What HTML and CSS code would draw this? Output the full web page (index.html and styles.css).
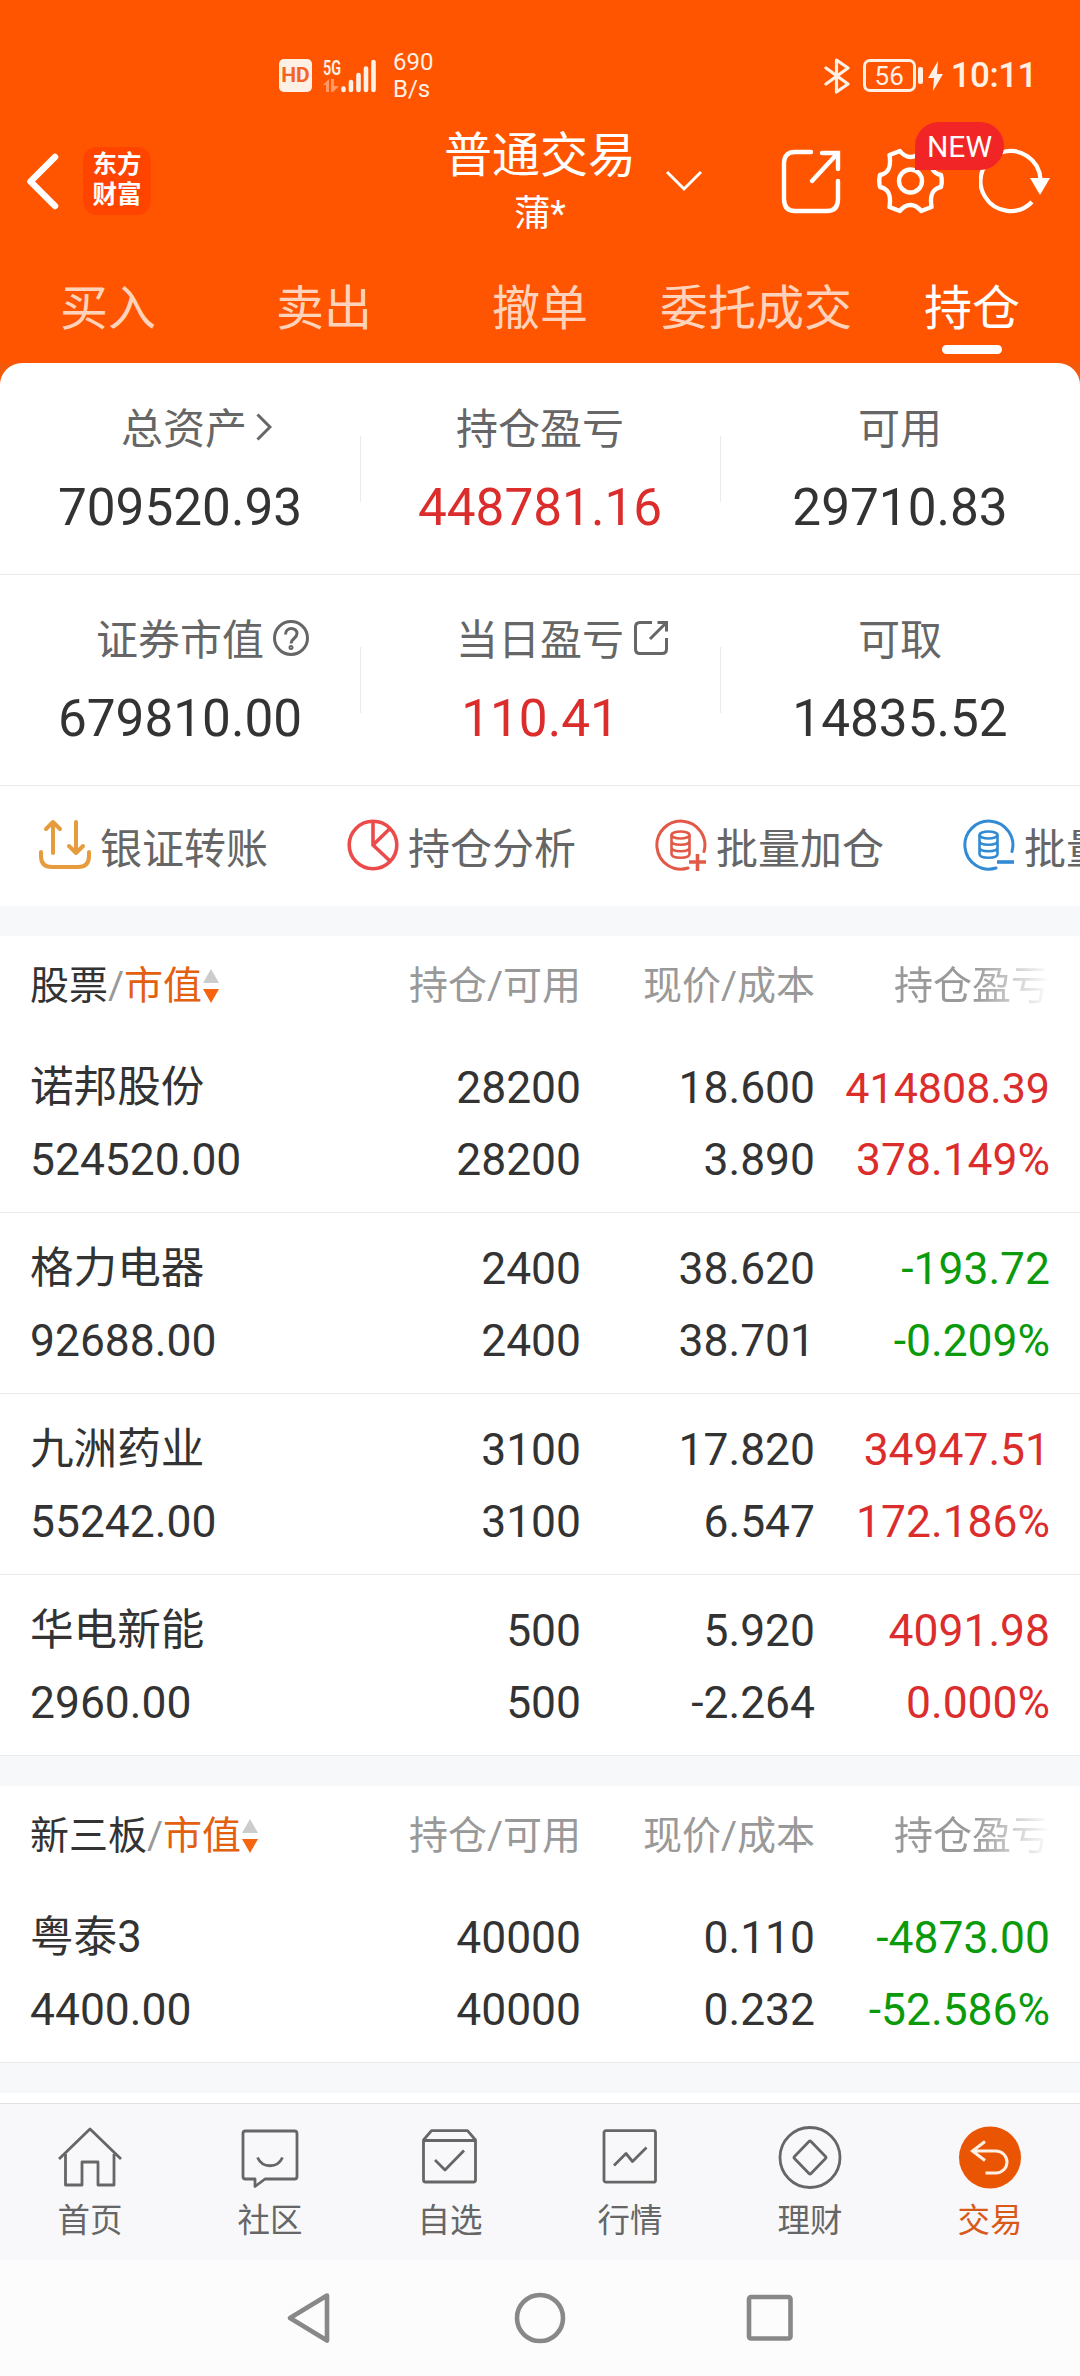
FILE: index.html
```html
<!DOCTYPE html>
<html lang="zh-CN">
<head>
  <meta charset="UTF-8" />
  <meta name="viewport" content="width=device-width, initial-scale=1" />
  <title>普通交易 - 持仓</title>
  <link rel="stylesheet" href="styles.css">
</head>
<body>

  <header class="header">
    <!-- STATUS BAR -->
    <div class="status">
      <div class="status-left">
        <span class="hd">HD</span>
        <svg class="signal" width="54" height="34" viewBox="0 0 54 34">
          <text x="0" y="15.500" class="signal-text" textLength="18" lengthAdjust="spacingAndGlyphs">5G</text>
          <g fill="#ff9a66">
            <path d="M0 26l6-6v13H3v-7z" />
            <path d="M8 20h3v7h5l-6 6H8z" />
          </g>
          <g stroke="#fff0e6" stroke-width="4.6" stroke-linecap="round">
            <path d="M20.500 29.500v1.500M28 23v8M35.500 16v15M43 9.500v21.500M50.500 3v28" />
          </g>
        </svg>
        <div class="speed"><span>690</span><span>B/s</span></div>
      </div>
      <div class="status-right">
        <svg width="27" height="36" viewBox="0 0 27 36" fill="none" stroke="#fff0e6" stroke-width="3.2" stroke-linejoin="round" stroke-linecap="round">
          <path d="M2 10l22 16-11.500 8V2L24 10 2 26" />
        </svg>
        <span class="battery">56</span>
        <span class="battery-tip"></span>
        <svg class="bolt" width="15" height="30" viewBox="0 0 15 30" fill="#fff0e6"><path d="M10 0L0 17h6L5 30l10-17H9z" /></svg>
        <span class="clock">10:11</span>
      </div>
    </div>

    <!-- TITLE BAR -->
    <div class="titlebar">
      <div class="title-left">
        <svg width="34" height="60" viewBox="0 0 34 60" fill="none" stroke="#fff" stroke-width="6.500" stroke-linecap="round" stroke-linejoin="round"><path d="M29 6L4.500 30.500 29 55" /></svg>
        <div class="brand"><span>东方</span><span>财富</span></div>
      </div>
      <div class="title">
        <h1>普通交易</h1>
        <p>蒲*</p>
      </div>
      <div class="title-right">
        <svg class="chevron" width="36" height="22" viewBox="0 0 36 22" fill="none" stroke="#fff" stroke-width="3"><path d="M1 2l17 17L35 2" /></svg>
        <svg class="share" width="60" height="66" viewBox="0 0 60 66" fill="none" stroke="#fff" stroke-width="4.400" stroke-linecap="round" stroke-linejoin="round">
          <path d="M30 4H14Q3 4 3 15v36q0 12 11 12h32q11 0 11-12V33" />
          <path d="M31 33L56 6M41 5h16v16" stroke-linejoin="miter" />
        </svg>
        <div class="gear">
          <svg width="67" height="66" viewBox="0 0 67 66" fill="none" stroke="#fff" stroke-width="4.400" stroke-linejoin="round">
            <path d="M22.900 3C26 7 29 9 33.500 9S41 7 44.100 3L54.500 7C53 17 54 25 64 27Q65.500 33 64 39C54 41 53 49 54.500 59L44.100 63C41 59 38 57 33.500 57S26 59 22.900 63L12.500 59C14 49 13 41 3 39Q1.500 33 3 27C13 25 14 17 12.500 7Z" />
            <circle cx="33.500" cy="33" r="11.500" />
          </svg>
          <span class="new">NEW</span>
        </div>
        <svg width="72" height="66" viewBox="0 0 72 66" fill="none">
          <path d="M53 54A30 30 0 1 1 61.500 31" stroke="#fff" stroke-width="4.200" />
          <path d="M51 30h20L61 47z" fill="#fff" />
        </svg>
      </div>
    </div>

    <!-- TABS -->
    <nav class="tabs">
      <a>买入</a>
      <a>卖出</a>
      <a>撤单</a>
      <a>委托成交</a>
      <a class="active">持仓</a>
    </nav>
  </header>

  <main>
    <!-- ACCOUNT SUMMARY -->
    <section class="summary-wrap">
      <div class="summary">
        <div class="cell">
          <div class="label shifted">总资产
            <svg class="mark arrow" width="16" height="28" viewBox="0 0 16 28"><path d="M1.500 1.500L14 14 1.500 26.500" /></svg>
          </div>
          <div class="value">709520.93</div>
        </div>
        <div class="cell">
          <div class="label">持仓盈亏</div>
          <div class="value up">448781.16</div>
        </div>
        <div class="cell">
          <div class="label">可用</div>
          <div class="value">29710.83</div>
        </div>
      </div>
      <div class="summary">
        <div class="cell">
          <div class="label">证券市值
            <svg class="mark" width="36" height="36" viewBox="0 0 36 36"><circle cx="18" cy="18" r="16.500" /><path d="M12.500 14.500C12.500 6.500 24 7 24 13.500c0 5-6 5-6 10" /><circle cx="18" cy="27.500" r="1" /></svg>
          </div>
          <div class="value">679810.00</div>
        </div>
        <div class="cell">
          <div class="label">当日盈亏
            <svg class="mark" width="36" height="36" viewBox="0 0 36 36"><path d="M19 2.500H7q-4.500 0-4.500 4.500v22q0 4.500 4.500 4.500h22q4.500 0 4.500-4.500V18M17 19L33 3M24.500 2.500h9v9" /></svg>
          </div>
          <div class="value up">110.41</div>
        </div>
        <div class="cell">
          <div class="label">可取</div>
          <div class="value">14835.52</div>
        </div>
      </div>
    </section>

    <!-- SHORTCUTS -->
    <section class="shortcuts">
      <div class="shortcut">
        <svg width="52" height="52" viewBox="0 0 52 52" fill="none" stroke="#e69b3c" stroke-width="4" stroke-linecap="round" stroke-linejoin="round">
          <path d="M2 33v4q0 11 11 11h26q11 0 11-11v-4M14 34V3M7 10l7-7 7 7M37 3v31M30 27l7 7 7-7" />
        </svg>
        <span>银证转账</span>
      </div>
      <div class="shortcut">
        <svg width="52" height="52" viewBox="0 0 52 52" fill="none" stroke="#ec4b4b" stroke-width="3.600">
          <circle cx="26" cy="26" r="23.800" /><path d="M26 2v24l17 16M26 26L43 9.500" />
        </svg>
        <span>持仓分析</span>
      </div>
      <div class="shortcut">
        <svg width="52" height="52" viewBox="0 0 52 52" fill="none" stroke="#e25a47" stroke-width="3">
          <path d="M49 32.500A24 24 0 1 0 33 49" stroke-linecap="round" />
          <ellipse cx="25.500" cy="16" rx="9" ry="3.500" stroke-width="2.600" />
          <path d="M16.500 16v19c0 5 18 5 18 0V16M16.500 22c0 5 18 5 18 0M16.500 28.500c0 5 18 5 18 0" stroke-width="2.600" />
          <path d="M34 43h17M42.500 35v17" stroke-width="3.600" />
        </svg>
        <span>批量加仓</span>
      </div>
      <div class="shortcut">
        <svg width="52" height="52" viewBox="0 0 52 52" fill="none" stroke="#338bd4" stroke-width="3">
          <path d="M49 32.500A24 24 0 1 0 33 49" stroke-linecap="round" />
          <ellipse cx="25.500" cy="16" rx="9" ry="3.500" stroke-width="2.600" />
          <path d="M16.500 16v19c0 5 18 5 18 0V16M16.500 22c0 5 18 5 18 0M16.500 28.500c0 5 18 5 18 0" stroke-width="2.600" />
          <path d="M34 43h17" stroke-width="3.600" />
        </svg>
        <span>批量减仓</span>
      </div>
    </section>

    <!-- STOCKS -->
    <section class="holdings">
      <div class="row head">
        <div class="name"><b>股票</b>/<em>市值</em><i class="sort"></i></div>
        <div>持仓/可用</div>
        <div>现价/成本</div>
        <div class="fade">持仓盈亏</div>
      </div>
      <div class="row">
        <div>诺邦股份<br>524520.00</div>
        <div>28200<br>28200</div>
        <div>18.600<br>3.890</div>
        <div class="up"><span class="tight">414808.39</span><br>378.149%</div>
      </div>
      <div class="row">
        <div>格力电器<br>92688.00</div>
        <div>2400<br>2400</div>
        <div>38.620<br>38.701</div>
        <div class="down">-193.72<br>-0.209%</div>
      </div>
      <div class="row">
        <div>九洲药业<br>55242.00</div>
        <div>3100<br>3100</div>
        <div>17.820<br>6.547</div>
        <div class="up">34947.51<br>172.186%</div>
      </div>
      <div class="row">
        <div>华电新能<br>2960.00</div>
        <div>500<br>500</div>
        <div>5.920<br>-2.264</div>
        <div class="up">4091.98<br>0.000%</div>
      </div>
    </section>

    <!-- NEEQ -->
    <section class="holdings">
      <div class="row head">
        <div class="name"><b>新三板</b>/<em>市值</em><i class="sort"></i></div>
        <div>持仓/可用</div>
        <div>现价/成本</div>
        <div class="fade">持仓盈亏</div>
      </div>
      <div class="row">
        <div>粤泰3<br>4400.00</div>
        <div>40000<br>40000</div>
        <div>0.110<br>0.232</div>
        <div class="down">-4873.00<br>-52.586%</div>
      </div>
    </section>
    <section class="next"></section>
  </main>

  <!-- BOTTOM TAB BAR -->
  <nav class="tabbar">
    <a>
      <svg viewBox="0 0 64 64"><path d="M1 33L32 3l31 30M7.500 28v31H24V36h16v23h16V28" /></svg>
      <span>首页</span>
    </a>
    <a>
      <svg viewBox="0 0 64 64"><path d="M7.500 5h49q2.500 0 2.500 2.500v43q0 2.500-2.500 2.500H27l-10 7.500V53H7.500Q5 53 5 50.500v-43Q5 5 7.500 5zM19.500 31.500c5 11 20 11 25 0" /></svg>
      <span>社区</span>
    </a>
    <a>
      <svg viewBox="0 0 64 64"><path d="M5.500 14v40q0 2 2 2h48q2 0 2-2V14l-8-9.300H13.500zM5.500 14.500h52M17 34l10 10 19-19.500" /></svg>
      <span>自选</span>
    </a>
    <a>
      <svg viewBox="0 0 64 64"><rect x="6" y="4.700" width="51.500" height="51.500" rx="2" /><path d="M16 39.500l12-12 6.500 8L48.500 21.500" /></svg>
      <span>行情</span>
    </a>
    <a>
      <svg viewBox="0 0 64 64"><circle cx="32" cy="31.500" r="30" /><path d="M31 15.500q1-1 2 0L47.500 30.500q1 1 0 2L33 47.500q-1 1-2 0L16.500 32.500q-1-1 0-2z" /></svg>
      <span>理财</span>
    </a>
    <a class="active">
      <svg viewBox="0 0 64 64"><circle class="disc" cx="32" cy="31.500" r="31" /><path class="back" d="M27 15.500L14.500 25 27 34.500M14.500 25H38a11 11 0 0 1 0 22H27.500" /></svg>
      <span>交易</span>
    </a>
  </nav>

  <!-- SYSTEM KEYS -->
  <footer class="keys">
    <svg width="50" height="54" viewBox="0 0 50 54"><path d="M42 4.500L5 27l37 22.500z" /></svg>
    <svg width="54" height="54" viewBox="0 0 54 54"><circle cx="27" cy="27" r="23" /></svg>
    <svg width="50" height="54" viewBox="0 0 50 54"><rect x="4" y="6" width="41.500" height="41.500" rx="2" /></svg>
  </footer>

</body>
</html>
```
FILE: styles.css
```css
* {
  box-sizing: border-box;
  margin: 0;
  padding: 0;
}

body {
  width: 1080px;
  height: 2376px;
  display: flex;
  flex-direction: column;
  overflow: hidden;
  font-family: Roboto, "Noto Sans CJK SC", sans-serif;
  background: #f7f8fa;
  color: #333;
}

svg {
  display: block;
  flex-shrink: 0;
}

/* HEADER */
.header {
  height: 363px;
  background: #ff5500;
  color: #fff;
}

.status {
  height: 120px;
  padding: 31px 43px 0 279px;
  display: flex;
  justify-content: space-between;
  align-items: center;
  color: #fff0e6;
}

.status-left,
.status-right {
  display: flex;
  align-items: center;
}

.hd {
  width: 33px;
  height: 33px;
  border-radius: 5px;
  background: #fff0e6;
  color: #f26522;
  font-size: 21px;
  font-weight: 700;
  line-height: 33px;
  text-align: center;
}

.signal {
  margin-left: 11px;
  overflow: visible;
}

.signal-text {
  font-size: 21px;
  font-weight: 600;
  fill: #fff0e6;
}

.speed {
  margin-left: 16px;
  font-size: 24px;
  line-height: 27px;
}

.speed span {
  display: block;
}

.battery {
  width: 53px;
  height: 33px;
  margin-left: 12px;
  border: 3px solid #fff0e6;
  border-radius: 7px;
  font-size: 26px;
  line-height: 28px;
  text-align: center;
}

.battery-tip {
  width: 5px;
  height: 17px;
  margin-left: 2px;
  border-radius: 2px;
  background: #fff0e6;
}

.bolt {
  margin: 0 8px 0 5px;
}

.clock {
  font-size: 35px;
  line-height: 40px;
  font-weight: 500;
  letter-spacing: -0.5px;
}

.titlebar {
  height: 123px;
  display: flex;
  align-items: center;
}

.title-left {
  width: 444px;
  padding-left: 26px;
  display: flex;
  align-items: center;
}

.brand {
  width: 68px;
  height: 68px;
  margin-left: 23px;
  padding-top: 3px;
  border-radius: 14px;
  background: #ff4400;
  font-size: 24.5px;
  font-weight: 700;
  line-height: 30px;
  text-align: center;
}

.brand span {
  display: block;
}

.title {
  width: 192px;
  padding-top: 5px;
  text-align: center;
}

.title h1 {
  font-size: 48px;
  font-weight: 400;
  line-height: 60px;
}

.title p {
  font-size: 36px;
  line-height: 56px;
}

.title-right {
  padding-left: 30px;
  display: flex;
  align-items: center;
}

.title-left,
.title-right {
  padding-bottom: 1px;
}

.share {
  margin: 0 36px 0 79px;
}

.gear {
  position: relative;
  margin-right: 35px;
}

.new {
  position: absolute;
  left: 38px;
  top: -26px;
  width: 89px;
  height: 48px;
  border-radius: 24px 24px 24px 0;
  background: #f12525;
  font-size: 30px;
  line-height: 49px;
  text-align: center;
}

.tabs {
  height: 120px;
  display: flex;
}

.tabs a {
  flex: 1;
  padding-top: 31px;
  font-size: 48px;
  line-height: 70px;
  text-align: center;
  white-space: nowrap;
  color: #ffd3bb;
}

.tabs .active {
  color: #fff;
}

.tabs .active::after {
  content: "";
  display: block;
  width: 60px;
  height: 9px;
  margin: 1px auto 0;
  border-radius: 5px;
  background: #fff;
}

/* SUMMARY */
.summary-wrap {
  background: #fff;
  border-radius: 22px 22px 0 0;
}

main {
  background: linear-gradient(#f25a0a 40px, #f7f8fa 40px);
}

.summary {
  height: 211px;
  display: flex;
  align-items: center;
  border-bottom: 1px solid #ebebeb;
}

.summary:first-child {
  height: 212px;
}

.cell {
  flex: 1;
  padding-top: 1px;
  text-align: center;
}

.cell + .cell {
  background: linear-gradient(#ebebeb, #ebebeb) no-repeat left center / 1px 66px;
}

.label {
  position: relative;
  width: max-content;
  margin: 0 auto;
  font-size: 42px;
  line-height: 76px;
  color: #666;
}

.shifted {
  left: 4px;
}

/* small icon hanging after the label */
.mark {
  position: absolute;
  left: calc(100% + 9px);
  top: 17px;
  fill: none;
  stroke: #666;
  stroke-width: 3;
}

.arrow {
  top: 21px;
}

.value {
  font-size: 51.3px;
  line-height: 79px;
}

.up {
  color: #dc2d2d;
}

.down {
  color: #0a9a0a;
}

/* SHORTCUTS */
.shortcuts {
  height: 120px;
  padding: 0 0 2px 39px;
  display: flex;
  align-items: center;
  gap: 79px;
  overflow: hidden;
  background: #fff;
  font-size: 42px;
  color: #666;
}

.shortcut {
  flex-shrink: 0;
  display: flex;
  align-items: center;
  gap: 9px;
  white-space: nowrap;
}

/* HOLDINGS */
.holdings {
  margin-top: 30px;
  background: #fff;
}

.row {
  height: 181px;
  padding: 20px 30px 0 30px;
  display: grid;
  grid-template-columns: 251px 300px 234px 235px;
  border-bottom: 1px solid #ebebeb;
  font-size: 44.4px;
  line-height: 72px;
  white-space: nowrap;
  text-align: right;
}

.row > :first-child {
  text-align: left;
}

.row:not(.head) > :first-child::first-line {
  font-size: 43.6px;
}

.row.head {
  height: 96px;
  padding-top: 0;
  border-bottom: 0;
  font-size: 39px;
  line-height: 100px;
  color: #999;
}

.head b,
.head em {
  font-weight: 400;
  font-style: normal;
  color: #333;
}

.head em {
  color: #e2600f;
}

.name {
  display: flex;
  align-items: center;
}

.sort {
  width: 16px;
  height: 34px;
  margin-left: 1px;
  display: flex;
  flex-direction: column;
  justify-content: space-between;
}

.sort::before,
.sort::after {
  content: "";
  border: 8px solid transparent;
  border-top-width: 0;
  border-bottom: 14px solid #ccc;
}

.sort::after {
  border-bottom-width: 0;
  border-top: 14px solid #f5640f;
}

.fade {
  -webkit-mask-image: linear-gradient(to right, #000 68%, transparent);
  mask-image: linear-gradient(to right, #000 68%, transparent);
}

.tight {
  font-size: 43px;
}

.next {
  height: 10px;
  margin-top: 30px;
  background: #fff;
}

/* BOTTOM BARS */
.tabbar {
  height: 157px;
  display: flex;
  border-top: 1px solid #e2e2e2;
  background: #f8f8fa;
}

.tabbar a {
  flex: 1;
  padding-top: 22px;
  display: flex;
  flex-direction: column;
  align-items: center;
  font-size: 32.5px;
  line-height: 63px;
  color: #666;
}

.tabbar svg {
  width: 64px;
  height: 64px;
  fill: none;
  stroke: #666;
  stroke-width: 2.8;
  stroke-linejoin: round;
}

.tabbar .active {
  color: #d85a1a;
}

.tabbar .disc {
  fill: #ea5504;
  stroke: none;
}

.tabbar .back {
  stroke: #fff0e6;
  stroke-width: 3;
  stroke-linejoin: miter;
}

.keys {
  flex: 1;
  padding-left: 285px;
  display: flex;
  align-items: center;
  gap: 178px;
  background: #fcfcfc;
}

.keys svg {
  fill: none;
  stroke: #888;
  stroke-width: 4.6;
  stroke-linejoin: round;
}
```
